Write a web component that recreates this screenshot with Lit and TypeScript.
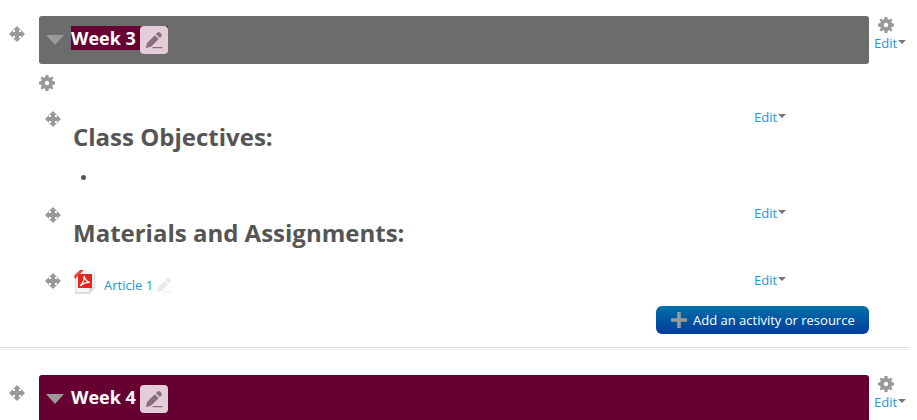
import { LitElement, html, css, svg } from "lit";
import { customElement } from "lit/decorators.js";

const moveIcon = html`<svg class="ico16" viewBox="0 0 16 16"><path fill="#999" d="M8 0 L12 4 H10 V6 H12 V4 L16 8 L12 12 V10 H10 V12 H12 L8 16 L4 12 H6 V10 H4 V12 L0 8 L4 4 V6 H6 V4 H4 Z"/></svg>`;

const gearIcon = html`<svg class="ico16" viewBox="0 0 16 16"><path fill="#999" fill-rule="evenodd" d="M6.6 0 H9.4 L9.8 2.2 L11.2 2.8 L13 1.5 L14.5 3 L13.2 4.8 L13.8 6.2 L16 6.6 V9.4 L13.8 9.8 L13.2 11.2 L14.5 13 L13 14.5 L11.2 13.2 L9.8 13.8 L9.4 16 H6.6 L6.2 13.8 L4.8 13.2 L3 14.5 L1.5 13 L2.8 11.2 L2.2 9.8 L0 9.4 V6.6 L2.2 6.2 L2.8 4.8 L1.5 3 L3 1.5 L4.8 2.8 L6.2 2.2 Z M8 5.8 A2.2 2.2 0 1 0 8 10.2 A2.2 2.2 0 1 0 8 5.8 Z"/></svg>`;

const pencilPaths = svg`<path d="M12.2 1.8 a2 2 0 0 1 2.9 0 l1 1 a2 2 0 0 1 0 2.9 l-1.3 1.3 l-3.9 -3.9 Z M9.8 4.2 l3.9 3.9 L6 15.8 L0.8 17 L2.1 11.9 Z"/><rect x="7.5" y="16" width="10" height="1.2"/>`;

const caret = html`<span class="caret"></span>`;

const editMenu = html`<span class="edit">Edit${caret}</span>`;

const sectionHead = (name: string, selected: boolean) => html`
  <div class="sec-row">
    <div class="handle">${moveIcon}</div>
    <div class="banner ${selected ? "dim" : ""}">
      <span class="tri"></span>
      <span class="name-wrap">
        <span class="name">${name}</span>
        <span class="pen"><svg viewBox="0 0 18 18">${pencilPaths}</svg></span>
      </span>
    </div>
    <div class="sec-ctl">
      <div class="sec-gear">${gearIcon}</div>
      ${editMenu}
    </div>
  </div>
`;

@customElement("app-root")
export class AppRoot extends LitElement {
  static styles = css`
    :host {
      display: block;
      width: 909px;
      height: 420px;
      overflow: hidden;
      background: #fff;
      font-family: "Open Sans", "Liberation Sans", sans-serif;
      color: #555;
    }
    .ico16 { width: 16px; height: 16px; display: block; }
    .section { padding-top: 16px; }
    .sec-row { display: flex; align-items: flex-start; }
    .handle { width: 39px; padding: 10px 0 0 9px; box-sizing: border-box; flex: none; }
    .banner {
      width: 830px;
      height: 48px;
      flex: none;
      box-sizing: border-box;
      background: #660033;
      border-radius: 3px;
      display: flex;
      align-items: center;
      padding: 0 0 0 7px;
    }
    .banner.dim { background: #6c6c6c; }
    .tri {
      width: 0; height: 0;
      border-left: 9px solid transparent;
      border-right: 9px solid transparent;
      border-top: 10px solid #999;
      margin: -1px 7px 0 0;
      flex: none;
    }
    .name-wrap { display: inline-flex; align-items: center; }
    .name {
      font-size: 18px;
      font-weight: 700;
      line-height: 24px;
      color: #fff;
      width: 69px;
      margin-bottom: 4px;
      white-space: nowrap;
      box-sizing: border-box;
    }
    .dim .name-wrap {
      height: 24px;
      margin-top: -4px;
      align-items: flex-start;
      background: #660033;
    }
    .dim .name { margin-bottom: 0; }
    .pen {
      width: 28px; height: 28px;
      background: #e3cdd8;
      border-radius: 4px;
      display: flex;
      align-items: center;
      justify-content: center;
      flex: none;
    }
    .pen svg { width: 18px; height: 18px; fill: #8a6c7b; }
    .sec-ctl {
      width: 40px;
      flex: none;
      padding: 1px 0 0 5px;
      box-sizing: border-box;
    }
    .sec-gear { padding-left: 4px; }
    .sec-ctl .edit { display: flex; margin-top: 2px; }
    .edit {
      font-size: 13px;
      line-height: 16px;
      color: #1a98e0;
      white-space: nowrap;
      display: inline-flex;
      align-items: center;
    }
    .caret {
      width: 0; height: 0;
      border-left: 4px solid transparent;
      border-right: 4px solid transparent;
      border-top: 4px solid #777;
      margin-left: 1px;
      margin-top: -2px;
    }
    .content { padding: 11px 0 0 39px; }
    .mods { width: 830px; }
    .mod {
      display: grid;
      grid-template-columns: 34px 1fr 115px;
      box-sizing: border-box;
    }
    .mod .handle2 { padding: 0 0 0 6px; }
    .m1 .right, .m2 .right { margin-top: -6px; }
    .m3 .right { margin-top: -5px; }
    .m1 { padding-top: 20px; height: 116px; }
    .m2 { height: 66px; }
    .h {
      font-size: 24px;
      font-weight: 700;
      line-height: 32px;
      color: #555;
      margin: 10px 0 0;
      white-space: nowrap;
    }
    .bullet {
      width: 5px; height: 5px;
      border-radius: 50%;
      background: #555;
      margin: 22px 0 0 8px;
    }
    .m3 { height: 30px; }
    .activity { display: flex; align-items: flex-start; }
    .pdf { width: 22px; height: 24px; display: block; flex: none; margin: -3px 0 0 1px; }
    .alink { font-size: 13px; line-height: 16px; color: #1a98e0; margin: 4px 0 0 8px; white-space: nowrap; }
    .pen-light { width: 16px; height: 16px; fill: #eaeaea; margin: 4px 0 0 3px; display: block; flex: none; }
    .add-row { width: 830px; display: flex; justify-content: flex-end; padding-top: 3px; }
    .add {
      width: 213px;
      height: 28px;
      box-sizing: border-box;
      border-radius: 6px;
      background: linear-gradient(#0070a8, #003c9e);
      color: #fff;
      font-size: 13px;
      display: flex;
      align-items: center;
      padding-left: 15px;
      gap: 6px;
      white-space: nowrap;
    }
    .plus { width: 16px; height: 16px; fill: #999; flex: none; }
    .rule {
      height: 1px;
      background: #fff;
      border-top: 1px solid #ddd;
      border-bottom: 1px solid #eee;
      margin-top: 13px;
    }
    .section.next { padding-top: 25px; }
  `;

  render() {
    return html`
      <div class="section">
        ${sectionHead("Week 3", true)}
        <div class="content">
          ${gearIcon}
          <div class="mods">
            <div class="mod m1">
              <div class="handle2">${moveIcon}</div>
              <div>
                <h3 class="h">Class Objectives:</h3>
                <div class="bullet"></div>
              </div>
              <div class="right">${editMenu}</div>
            </div>
            <div class="mod m2">
              <div class="handle2">${moveIcon}</div>
              <div><h3 class="h">Materials and Assignments:</h3></div>
              <div class="right">${editMenu}</div>
            </div>
            <div class="mod m3">
              <div class="handle2">${moveIcon}</div>
              <div class="activity">
                <svg class="pdf" viewBox="0 0 22 24">
                  <path fill="#dcdcdc" d="M1 2 H21 V18 L16 24 H1 Z"/>
                  <path fill="#f6f6f6" d="M2 1 H20 V17 L15 22 H2 Z"/>
                  <path fill="#cfcfcf" d="M15 22 L15.5 17.5 L20 17 Z"/>
                  <rect x="4" y="4" width="14" height="14" fill="#e4261c"/>
                  <path fill="#e8413a" d="M0 6 L6 0 H10 L1 9 Z"/>
                  <path fill="none" stroke="#f8f8f8" stroke-width="1.2" d="M6 16 C9 13 10.5 9 10 6 C11 9 12.5 12 16 12.5 C12.5 12.2 9 13.5 6 16 Z"/>
                </svg>
                <span class="alink">Article 1</span>
                <svg class="pen-light" viewBox="0 0 18 18">${pencilPaths}</svg>
              </div>
              <div class="right">${editMenu}</div>
            </div>
          </div>
          <div class="add-row">
            <div class="add">
              <svg class="plus" viewBox="0 0 16 16"><path d="M6.2 0 H9.8 V6.2 H16 V9.8 H9.8 V16 H6.2 V9.8 H0 V6.2 H6.2 Z"/></svg>
              <span>Add an activity or resource</span>
            </div>
          </div>
        </div>
        <div class="rule"></div>
      </div>
      <div class="section next">${sectionHead("Week 4", false)}</div>
    `;
  }
}
